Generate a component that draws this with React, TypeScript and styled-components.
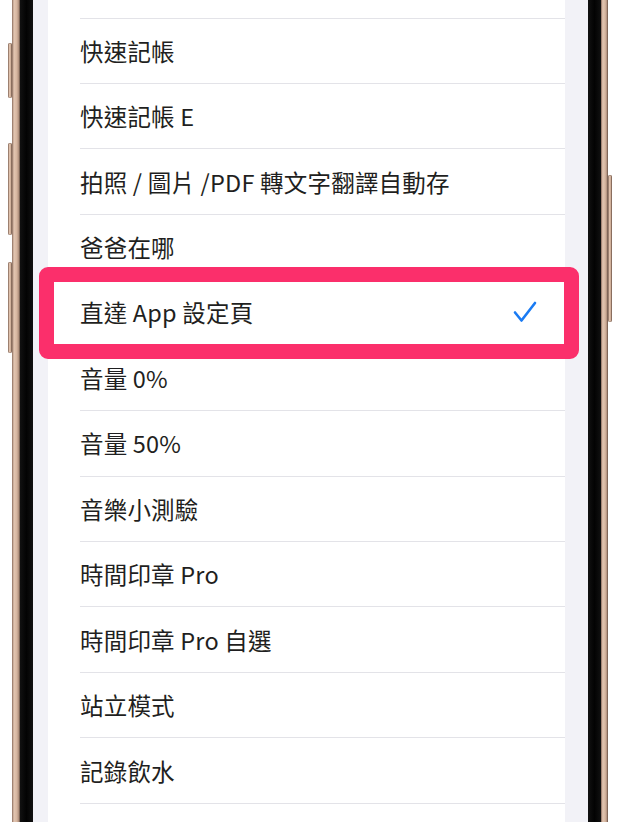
import * as React from 'react';
import styled, { createGlobalStyle } from 'styled-components';

const GlobalStyle = createGlobalStyle`
  html, body {
    margin: 0;
    padding: 0;
    background: #ffffff;
  }
  body {
    font-family: "Noto Sans CJK TC", "Noto Sans", sans-serif;
    -webkit-font-smoothing: antialiased;
  }
`;

const GOLD =
  'linear-gradient(to right, #8a6c5d 0%, #e3c6b2 25%, #d6b6a0 60%, #b39380 82%, #5e493e 100%)';

const Page = styled.div`
  display: flex;
  width: 621px;
  height: 822px;
  overflow: hidden;
  background: #ffffff;
`;

const ButtonRail = styled.div<{ $side: 'left' | 'right' }>`
  display: flex;
  flex-direction: column;
  align-items: ${({ $side }) => ($side === 'left' ? 'flex-end' : 'flex-start')};
  width: ${({ $side }) => ($side === 'left' ? 12 : 13)}px;
  flex-shrink: 0;
  padding-top: ${({ $side }) => ($side === 'left' ? 43 : 175)}px;
`;

const SideButton = styled.div<{ $h: number; $gap: number }>`
  width: 4px;
  height: ${({ $h }) => $h}px;
  margin-bottom: ${({ $gap }) => $gap}px;
  background: ${GOLD};
  border-radius: 2px;
  box-shadow: inset 0 0 0 0.5px rgba(110, 82, 68, 0.7);
`;

const GoldEdge = styled.div<{ $w: number }>`
  width: ${({ $w }) => $w}px;
  flex-shrink: 0;
  background: ${GOLD};
`;

const BezelEdge = styled.div`
  width: 13px;
  flex-shrink: 0;
  background: linear-gradient(to right, #111 0%, #030303 50%, #111 100%);
`;

const Screen = styled.div`
  position: relative;
  flex: 1;
  background: #f2f2f7;
  padding: 0 23px 0 15px;
  overflow: hidden;
`;

const Card = styled.div`
  background: #ffffff;
  padding-top: 17.5px;
  height: 100%;
  box-sizing: border-box;
`;

const Row = styled.div`
  display: flex;
  align-items: center;
  justify-content: space-between;
  height: 65.45px;
  box-sizing: border-box;
  margin-left: 32px;
  padding-right: 28px;
  border-top: 1px solid #e3e3e8;
`;

const Label = styled.span`
  font-size: 23.5px;
  color: #1f1f21;
  white-space: nowrap;
  letter-spacing: 0.2px;
`;

const Highlight = styled.div`
  position: absolute;
  left: 6px;
  top: 267px;
  width: 540px;
  height: 92px;
  box-sizing: border-box;
  border: 15px solid #fb2f6b;
  border-radius: 9px;
  pointer-events: none;
`;

const Check = () => (
  <svg width="24" height="22" viewBox="0 0 24 22" fill="none">
    <polyline
      points="2,11.5 8.5,19.5 22,2"
      stroke="#1a7bf3"
      strokeWidth="2.6"
      strokeLinecap="round"
      strokeLinejoin="round"
    />
  </svg>
);

const items = [
  '快速記帳',
  '快速記帳 E',
  '拍照 / 圖片 /PDF 轉文字翻譯自動存',
  '爸爸在哪',
  '直達 App 設定頁',
  '音量 0%',
  '音量 50%',
  '音樂小測驗',
  '時間印章 Pro',
  '時間印章 Pro 自選',
  '站立模式',
  '記錄飲水',
  '',
];

const SELECTED = '直達 App 設定頁';

export default function App() {
  return (
    <>
      <GlobalStyle />
      <Page>
        <ButtonRail $side="left">
          <SideButton $h={55} $gap={45} />
          <SideButton $h={92} $gap={27} />
          <SideButton $h={91} $gap={0} />
        </ButtonRail>
        <GoldEdge $w={8} />
        <BezelEdge />
        <Screen>
          <Card>
            {items.map((item, i) => (
              <Row key={i}>
                <Label>{item}</Label>
                {item === SELECTED && <Check />}
              </Row>
            ))}
          </Card>
          <Highlight />
        </Screen>
        <BezelEdge />
        <GoldEdge $w={7} />
        <ButtonRail $side="right">
          <SideButton $h={147} $gap={0} />
        </ButtonRail>
      </Page>
    </>
  );
}
